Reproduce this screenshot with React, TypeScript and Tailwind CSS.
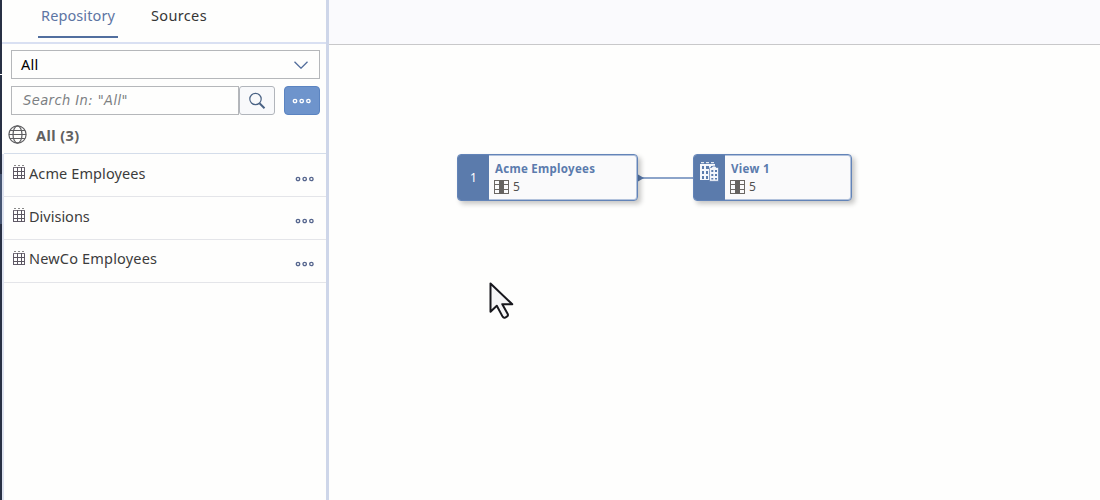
import React from "react";

const GridIcon = () => (
  <svg width="14" height="16" viewBox="0 0 14 16" fill="none" stroke="#5b5661" shapeRendering="crispEdges">
    <path d="M2 .5h2M6 .5h2M10 .5h2" stroke="#888" />
    <path d="M1 2.500h12" stroke="#77717c" />
    <path d="M1.500 2.500v11M12.500 2.500v11M1 13.500h12" stroke="#615b68" />
    <path d="M1 6.500h12M1 10.500h12M5.500 2v12M9.500 2v12" />
  </svg>
);

const Dots = ({ color }: { color: string }) => (
  <svg width="20" height="6" viewBox="0 0 20 6" fill="none" stroke={color} strokeWidth="1.3">
    <circle cx="3" cy="3" r="1.700" />
    <circle cx="9.700" cy="3" r="1.700" />
    <circle cx="16.400" cy="3" r="1.700" />
  </svg>
);

const ColumnsIcon = () => (
  <svg width="15" height="14" viewBox="0 0 15 14" fill="none" stroke="#6b6763" shapeRendering="crispEdges">
    <path d="M.5.5h14v13H.5zM0 4.500h15M0 9.500h15" />
    <path d="M5 0h5v14H5z" fill="#666360" stroke="none" />
  </svg>
);

const BuildingIcon = () => (
  <svg width="20" height="20" viewBox="0 0 20 20" fill="none">
    <path d="M2 .7h3M7 .7h3M12 .7h3" stroke="#fff" />
    <path d="M1 2h15v16H1z" fill="#f4f6fb" />
    <path d="M3 4h2v3H3zM7 4h3v3H7zM12 4h2v2h-2zM3 9h2v3H3zM7 9h2v3H7zM3 14h2v3H3zM7 14h2v3H7z" fill="#5b7bac" />
    <path d="M10.500 8.500V6.500q0-1 1-1h1.200q.5-1.500 2.300-1.500t2.300 1.500h1.200q1 0 1 1v12.800h-9z" fill="#f4f6fb" stroke="#5b7bac" strokeWidth=".7" />
    <path d="M12.300 8h2v2h-2zM16 8h2v2h-2zM12.300 12h2v2h-2zM16 12h2v2h-2zM12.300 16h2v1.500h-2zM16 16h2v1.500h-2z" fill="#5b7bac" />
  </svg>
);

function Row({ name, textClass, dotsClass }: { name: string; textClass: string; dotsClass: string }) {
  return (
    <div className="flex h-[43px] items-start border-b border-[#e4e5e9] pl-2 pr-[11px]">
      <span className="mt-[11px] flex"><GridIcon /></span>
      <span className={"ml-[3px] whitespace-nowrap text-[14.500px] leading-5 text-[#3c3c3c] " + textClass}>{name}</span>
      <span className={"ml-auto flex " + dotsClass}><Dots color="#56668e" /></span>
    </div>
  );
}

function Node({ title, icon, className, titleClass }: { title: string; icon: React.ReactNode; className: string; titleClass: string }) {
  return (
    <div className={"absolute top-[154px] flex h-[47px] overflow-hidden rounded-[4px] border border-[#6384b8] bg-[#fafafb] shadow-[3px_3px_5px_rgba(0,0,0,0.22),inset_0_0_0_1px_#b2c2dc] " + className}>
      <div className="flex w-[31px] shrink-0 justify-center bg-[#5b7bac] text-white">{icon}</div>
      <div className="pl-[6px] pt-[6px]">
        <div className={"whitespace-nowrap text-[11.500px] font-bold leading-4 text-[#5b7bad] " + titleClass}>{title}</div>
        <div className="-ml-px mt-[3px] flex h-[14px] items-center gap-1 text-[12px] leading-[14px] text-[#505050]">
          <ColumnsIcon /><span>5</span>
        </div>
      </div>
    </div>
  );
}

export default function App() {
  return (
    <div className="flex h-[500px] w-[1100px] overflow-hidden bg-[#fefefd] font-['Noto_Sans','Open_Sans',sans-serif]">
      <div className="flex w-[2px] shrink-0 flex-col bg-[#283044]">
        <div className="mt-[74px] h-px bg-white" />
        <div className="mt-[99px] h-[50px] bg-[#475673]" />
      </div>
      <aside className="flex w-[327px] shrink-0 flex-col border-r-[3px] border-[#ced6e9]">
        <div className="flex h-[44px] shrink-0 border-b-2 border-[#d9e0f2] pl-9">
          <div className="flex h-[38px] w-[80px] justify-center border-b-2 border-[#526f9f] pt-[5px] text-[14.500px] leading-5 tracking-[0.1px] text-[#5d75a3]"><span className="whitespace-nowrap">Repository</span></div>
          <div className="ml-[33px] pt-[5px] text-[14.500px] leading-5 tracking-[0.35px] text-[#363636]">Sources</div>
        </div>
        <div className="flex flex-col pl-[9px] pr-[6px] pt-[6px]">
          <div className="flex h-[29px] items-center justify-between border border-[#b5b7ba] pl-[9px] pr-[11px] text-[14.500px] tracking-[0.3px] text-black">
            <span>All</span>
            <svg width="14" height="8" viewBox="0 0 14 8" fill="none" stroke="#526d9c" strokeWidth="1.300"><path d="M.5.7 7 7.200 13.500.7" /></svg>
          </div>
          <div className="mt-[7px] flex h-[29px]">
            <div className="flex w-[228px] items-center border border-[#b5b7ba] pl-[11px] font-['DejaVu_Sans_Condensed','DejaVu_Sans',sans-serif] text-[14.500px] italic tracking-[0.43px] text-[#7c7f82]"><span className="whitespace-nowrap">Search In: "All"</span></div>
            <div className="flex w-[36px] items-center justify-center rounded-[3px] border border-[#b1b5bb] bg-[#f8f9fb]">
              <svg width="18" height="18" viewBox="0 0 18 18" fill="none" stroke="#496284"><circle cx="7.500" cy="7" r="5.700" strokeWidth="1.200" /><path d="m11.500 11.300 5 5" strokeWidth="2" /></svg>
            </div>
            <div className="ml-[9px] flex w-[36px] items-center justify-center rounded-[4px] border border-[#5b84c1] bg-[#6e94cc]"><Dots color="#fff" /></div>
          </div>
        </div>
        <div className="ml-[2px] flex h-[39px] shrink-0 border-b border-[#d4ddea] pl-1">
          <svg className="mt-[10px]" width="19" height="19" viewBox="0 0 19 19" fill="none" stroke="#5e5e61" strokeWidth="1.200"><circle cx="9.500" cy="9.500" r="8.600" /><ellipse cx="9.500" cy="9.500" rx="4.500" ry="8.600" /><path d="M2 5.500h15M1 9.500h17M2 13.500h15" /></svg>
          <span className="ml-[9px] mt-[10px] text-[14.500px] font-bold leading-5 tracking-[0.45px] text-[#616161]">All (3)</span>
        </div>
        <div className="flex-1 border-l-2 border-[#dee3f0]">
          <Row name="Acme Employees" textClass="mt-[9px] tracking-[0.1px]" dotsClass="mt-[22px]" />
          <Row name="Divisions" textClass="mt-[9px]" dotsClass="mt-[21px]" />
          <Row name="NewCo Employees" textClass="mt-[8px] tracking-[0.18px]" dotsClass="mt-[21px]" />
        </div>
      </aside>
      <main className="relative flex-1">
        <div className="h-[45px] border-b border-[#c8c8ca] bg-[#fafafd]" />
        <svg className="absolute left-[308px] top-[172px]" width="57" height="12" viewBox="0 0 57 12"><path d="M0 6h57" stroke="#6686b7" strokeWidth="1.300" /><path d="m1 2.500 6 3.500-6 3.500z" fill="#5b7bac" /></svg>
        <Node title="Acme Employees" className="left-[128px] w-[181px]" titleClass="tracking-[0.28px]" icon={<span className="mt-[15px] text-[12px] leading-4">1</span>} />
        <Node title="View 1" className="left-[364px] w-[159px]" titleClass="tracking-[0.3px]" icon={<span className="-ml-[2px] mt-[7px]"><BuildingIcon /></span>} />
        <svg className="absolute left-[159px] top-[281px]" width="28" height="40" viewBox="0 0 28 40"><path d="M2.500 2.500v28.300l6.300-6 5.800 10.800q1 1.700 3 .7l1.200-.7q1.800-1 .8-2.800l-5.300-9.600h10z" fill="#f5f5f7" stroke="#17171d" strokeWidth="2" strokeLinejoin="round" /></svg>
      </main>
    </div>
  );
}
